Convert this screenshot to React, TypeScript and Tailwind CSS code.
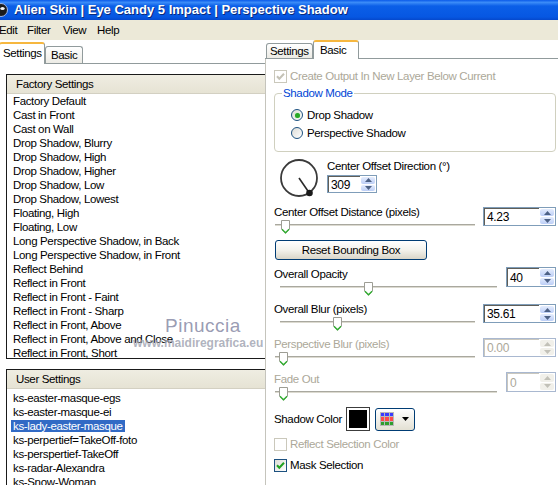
import React from "react";

const factory = [
  "Factory Default",
  "Cast in Front",
  "Cast on Wall",
  "Drop Shadow, Blurry",
  "Drop Shadow, High",
  "Drop Shadow, Higher",
  "Drop Shadow, Low",
  "Drop Shadow, Lowest",
  "Floating, High",
  "Floating, Low",
  "Long Perspective Shadow, in Back",
  "Long Perspective Shadow, in Front",
  "Reflect Behind",
  "Reflect in Front",
  "Reflect in Front - Faint",
  "Reflect in Front - Sharp",
  "Reflect in Front, Above",
  "Reflect in Front, Above and Close",
  "Reflect in Front, Short",
];

const user = [
  "ks-easter-masque-egs",
  "ks-easter-masque-ei",
  "ks-lady-easter-masque",
  "ks-perpertief=TakeOff-foto",
  "ks-perspertief-TakeOff",
  "ks-radar-Alexandra",
  "ks-Snow-Woman",
];

function Arrow({ up, disabled }: { up?: boolean; disabled?: boolean }) {
  return (
    <svg width="7" height="4" viewBox="0 0 7 4">
      <path d={up ? "M0 4L3.5 0L7 4Z" : "M0 0L3.5 4L7 0Z"} fill={disabled ? "#c2c1b8" : "#4d6185"} />
    </svg>
  );
}

function Spin({ value, className, disabled }: { value: string; className: string; disabled?: boolean }) {
  return (
    <div
      className={`flex shrink-0 border bg-white ${disabled ? "border-[#a9b8d0]" : "border-[#7f9db9]"} ${className}`}
    >
      {disabled ? (
        <div className="flex flex-1 items-center border-t border-l border-t-[#c9c7be] border-l-[#c9c7be] pl-[2px] text-[12px] leading-none text-[#aca899]">
          {value}
        </div>
      ) : (
        <div className="flex flex-1 items-center border-t border-l border-t-[#5f5e58] border-l-[#5f5e58] pl-[2px] text-[12px] leading-none">
          {value}
        </div>
      )}
      <div className="flex w-[16px] flex-col gap-[1px] p-[1px]">
        <div
          className={`flex flex-1 items-center justify-center rounded-[2px] ${
            disabled ? "bg-[#f1f0ea]" : "bg-gradient-to-b from-[#e4ecfd] to-[#bccef6]"
          }`}
        >
          <Arrow up disabled={disabled} />
        </div>
        <div
          className={`flex flex-1 items-center justify-center rounded-[2px] ${
            disabled ? "bg-[#f1f0ea]" : "bg-gradient-to-b from-[#e4ecfd] to-[#bccef6]"
          }`}
        >
          <Arrow disabled={disabled} />
        </div>
      </div>
    </div>
  );
}

function Thumb({ className }: { className: string }) {
  return (
    <svg className={`absolute top-[1px] ${className}`} width="9" height="14" viewBox="0 0 9 14">
      <path d="M0.5 0.5H8.5V9L4.5 13.3L0.5 9Z" fill="#fff" stroke="#9d9d94" />
      <path d="M1 9.3L4.5 12.8L8 9.3" fill="none" stroke="#2fae2f" strokeWidth="1.3" />
    </svg>
  );
}

function Track({ thumb }: { thumb: string }) {
  return (
    <div className="relative h-[14px]">
      <div className="absolute top-[5px] right-0 left-0 h-[3px] border-t border-b border-t-[#a9a89f] border-b-white bg-[#dcdad0]" />
      <Thumb className={thumb} />
    </div>
  );
}

function Check({ checked, disabled }: { checked?: boolean; disabled?: boolean }) {
  return (
    <div
      className={`flex h-[13px] w-[13px] shrink-0 items-center justify-center border ${
        disabled ? "border-[#cac8bb] bg-white" : "border-[#1c5180] bg-gradient-to-br from-[#dcdcd7] to-white"
      }`}
    >
      {checked && (
        <svg width="9" height="9" viewBox="0 0 9 9">
          <path
            d="M1 4.3L3.3 6.8L8 1.8"
            fill="none"
            stroke={disabled ? "#c4c2b6" : "#21a121"}
            strokeWidth="2"
          />
        </svg>
      )}
    </div>
  );
}

function Radio({ on }: { on?: boolean }) {
  return (
    <div className="flex h-[12px] w-[12px] shrink-0 items-center justify-center rounded-full border border-[#1c5180] bg-gradient-to-br from-[#dcdcd7] to-white">
      {on && <div className="h-[5px] w-[5px] rounded-full bg-[#28a828] shadow-[0_0_1px_#7be07b]" />}
    </div>
  );
}

export default function App() {
  const txt = "text-[11.5px] tracking-[-0.35px] leading-[14px]";
  return (
    <div className="relative flex h-[485px] w-[558px] flex-col overflow-hidden bg-white font-['Liberation_Sans',Arial,sans-serif] text-black">
      {/* title bar */}
      <div className="flex h-[20px] shrink-0 items-center bg-[linear-gradient(to_bottom,#0a5ae9_0%,#3b8cf8_12%,#0b5fe8_30%,#0657e2_85%,#0548cc_100%)] text-[13px] font-bold text-white [text-shadow:1px_1px_#0b2a7a]">
        <svg className="mr-[5px] ml-[-7px]" width="16" height="16" viewBox="0 0 16 16">
          <circle cx="8" cy="8" r="6.5" fill="#1b1b1b" stroke="#9fb6e6" />
          <ellipse cx="9.5" cy="6.5" rx="2.2" ry="1.6" fill="#f4f4f4" />
        </svg>
        <span className="whitespace-nowrap">Alien Skin | Eye Candy 5 Impact | Perspective Shadow</span>
      </div>

      {/* menu */}
      <div className={`flex h-[20px] shrink-0 items-center bg-[#ece9d8] ${txt}`}>
        <span className="ml-[-1px] w-[28px]">Edit</span>
        <span className="w-[36px]">Filter</span>
        <span className="w-[34px]">View</span>
        <span>Help</span>
      </div>

      <div className="flex flex-1">
        {/* left pane */}
        <div className="flex w-[265px] shrink-0 flex-col">
          <div className={`flex h-[24px] shrink-0 items-end border-b border-[#919b9c] ${txt}`}>
            <div className="relative z-10 mb-[-1px] ml-[-1px] flex h-[22px] w-[46px] items-start rounded-t-[3px] border-x border-t-2 border-x-[#919b9c] border-t-[#f6b73f] bg-white pt-[2px] pl-[3px]">
              Settings
            </div>
            <div className="flex h-[17px] w-[38px] items-start rounded-t-[3px] border-x border-t border-[#919b9c] bg-gradient-to-b from-white to-[#ecebe5] pt-[1px] pl-[5px]">
              Basic
            </div>
          </div>
          <div className={`flex flex-1 flex-col pt-[10px] pl-[6px] ${txt}`}>
            <div className="flex h-[285px] shrink-0 flex-col overflow-hidden border-t border-b border-l border-[#1a1a1a]">
              <div className="flex h-[19px] shrink-0 items-center border-b border-[#d3d0c2] bg-gradient-to-b from-[#efede2] to-[#e6e3d4] pl-[9px]">
                Factory Settings
              </div>
              <div className="pl-[4px]">
                {factory.map((f) => (
                  <div key={f} className="h-[14px] whitespace-nowrap">
                    <span className="px-[2px]">{f}</span>
                  </div>
                ))}
              </div>
            </div>
            <div className="mt-[10px] flex flex-1 flex-col overflow-hidden border-t border-l border-[#1a1a1a]">
              <div className="flex h-[19px] shrink-0 items-center border-b border-[#d3d0c2] bg-gradient-to-b from-[#efede2] to-[#e6e3d4] pl-[9px]">
                User Settings
              </div>
              <div className="pt-[2px] pl-[4px]">
                {user.map((u) => (
                  <div key={u} className="h-[14px] whitespace-nowrap">
                    <span className={u === "ks-lady-easter-masque" ? "bg-[#316ac5] px-[2px] text-white" : "px-[2px]"}>
                      {u}
                    </span>
                  </div>
                ))}
              </div>
            </div>
          </div>
        </div>

        {/* right pane */}
        <div className={`flex flex-1 flex-col ${txt}`}>
          <div className="flex h-[19px] shrink-0 items-end border-b border-[#919b9c] pl-[1px]">
            <div className="flex h-[15px] w-[47px] items-start rounded-t-[3px] border-x border-t border-[#919b9c] bg-gradient-to-b from-white to-[#ecebe5] pl-[3px]">
              Settings
            </div>
            <div className="relative z-10 mb-[-1px] flex h-[19px] w-[46px] items-start rounded-t-[3px] border-x border-t-2 border-x-[#919b9c] border-t-[#f6b73f] bg-white pt-[1px] pl-[6px]">
              Basic
            </div>
          </div>
          <div className="flex flex-1 flex-col border-l border-[#c5c4bc] pr-[2px] pl-[8px]">
            <div className="mt-[10px] flex h-[14px] items-center gap-[3px] text-[#aca899]">
              <Check checked disabled />
              <span>Create Output In New Layer Below Current</span>
            </div>

            <fieldset className="mt-[3px] rounded-[4px] border border-[#d0d0bf] pb-[11px]">
              <legend className="ml-[7px] px-[1px] text-[#0046d5]">Shadow Mode</legend>
              <div className="mt-[8px] flex h-[14px] items-center gap-[4px] pl-[16px]">
                <Radio on />
                <span>Drop Shadow</span>
              </div>
              <div className="mt-[4px] flex h-[14px] items-center gap-[4px] pl-[16px]">
                <Radio />
                <span>Perspective Shadow</span>
              </div>
            </fieldset>

            <div className="mt-[5px] flex items-start">
              <svg className="mt-[1px] ml-[5px]" width="40" height="40" viewBox="0 0 40 40">
                <circle cx="20" cy="20" r="18" fill="none" stroke="#3a3a3a" strokeWidth="1.8" />
                <path d="M20 20L30 34.5" stroke="#2a2a2a" strokeWidth="1.6" />
                <circle cx="30.5" cy="35" r="3.3" fill="#1a1a1a" />
              </svg>
              <div className="ml-[8px] flex flex-col pt-[2px]">
                <span>Center Offset Direction (°)</span>
                <Spin value="309" className="mt-[2px] h-[18px] w-[50px]" />
              </div>
            </div>

            <div className="mt-[7px] flex items-start">
              <div className="flex flex-1 flex-col pr-[8px]">
                <span>Center Offset Distance (pixels)</span>
                <div className="ml-[1px]">
                  <Track thumb="left-[6px]" />
                </div>
              </div>
              <Spin value="4.23" className="mt-[2px] h-[19px] w-[73px]" />
            </div>

            <button className="mt-[7px] ml-[1px] h-[20px] w-[152px] rounded-[3px] border border-[#003c74] bg-gradient-to-b from-white via-[#f3f2ec] to-[#d9d5c8] text-center">
              Reset Bounding Box
            </button>

            <div className="mt-[7px] flex items-start">
              <div className="flex flex-1 flex-col pr-[9px]">
                <span>Overall Opacity</span>
                <div className="ml-[6px]">
                  <Track thumb="left-[84px]" />
                </div>
              </div>
              <Spin value="40" className="h-[20px] w-[50px]" />
            </div>

            <div className="mt-[7px] flex items-start">
              <div className="flex flex-1 flex-col pr-[8px]">
                <span>Overall Blur (pixels)</span>
                <div className="ml-[6px]">
                  <Track thumb="left-[53px]" />
                </div>
              </div>
              <Spin value="35.61" className="mt-[2px] h-[19px] w-[73px]" />
            </div>

            <div className="mt-[7px] flex items-start">
              <div className="flex flex-1 flex-col pr-[8px] text-[#aca899]">
                <span>Perspective Blur (pixels)</span>
                <div className="ml-[1px]">
                  <Track thumb="left-[4px]" />
                </div>
              </div>
              <Spin value="0.00" disabled className="mt-[1px] h-[19px] w-[73px]" />
            </div>

            <div className="mt-[7px] flex items-start">
              <div className="flex flex-1 flex-col pr-[9px] text-[#aca899]">
                <span>Fade Out</span>
                <div className="ml-[1px]">
                  <Track thumb="left-[4px]" />
                </div>
              </div>
              <Spin value="0" disabled className="h-[20px] w-[50px]" />
            </div>

            <div className="mt-[7px] flex h-[24px] items-center">
              <span className="w-[72px]">Shadow Color</span>
              <div className="h-[24px] w-[24px] border border-[#3c3c3c] bg-white p-[2px]">
                <div className="h-full w-full bg-black" />
              </div>
              <div className="ml-[5px] flex h-[23px] w-[40px] items-center rounded-[3px] border border-[#003c74] bg-gradient-to-b from-white to-[#e3e0d3] pl-[4px]">
                <div className="grid h-[14px] w-[14px] grid-cols-3 gap-[1px] bg-[#b8b8b8] p-[1px]">
                  <div className="bg-[#3a3aff]" />
                  <div className="bg-[#3a3aff]" />
                  <div className="bg-[#3a3aff]" />
                  <div className="bg-[#ff4a4a]" />
                  <div className="bg-[#ff4a4a]" />
                  <div className="bg-[#ff4a4a]" />
                  <div className="bg-[#2e9e2e]" />
                  <div className="bg-[#2e9e2e]" />
                  <div className="bg-[#2e9e2e]" />
                </div>
                <svg className="ml-[8px]" width="7" height="4" viewBox="0 0 7 4">
                  <path d="M0 0L3.5 4L7 0Z" fill="#000" />
                </svg>
              </div>
            </div>

            <div className="mt-[6px] flex h-[14px] items-center gap-[3px] text-[#aca899]">
              <Check disabled />
              <span>Reflect Selection Color</span>
            </div>
            <div className="mt-[7px] flex h-[14px] items-center gap-[3px]">
              <Check checked />
              <span>Mask Selection</span>
            </div>
          </div>
        </div>
      </div>

      {/* watermark */}
      <span className="absolute top-[316px] left-[165px] text-[19px] leading-none tracking-[0.5px] text-[#8d90aa]/90">
        Pinuccia
      </span>
      <span className="absolute top-[337px] left-[133px] text-[12px] font-bold leading-none text-[#9c9fae]/80">
        www.maidiregrafica.eu
      </span>
    </div>
  );
}
